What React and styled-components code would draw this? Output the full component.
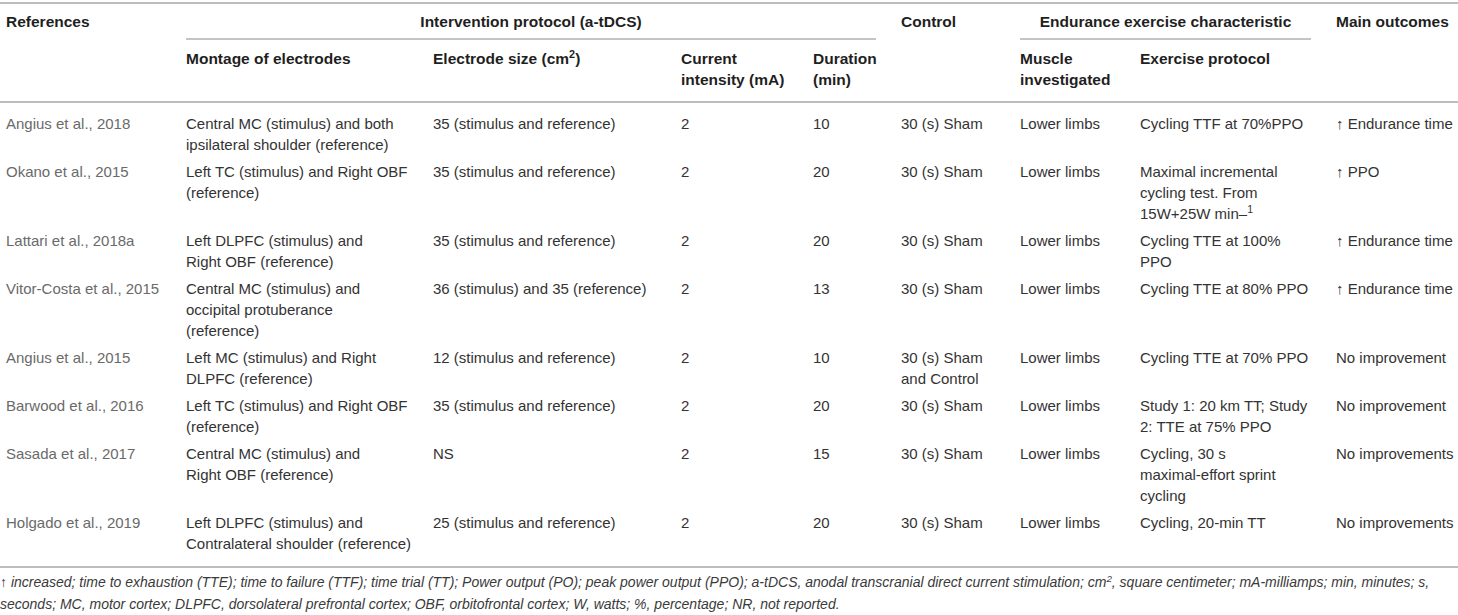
import styled, { createGlobalStyle } from 'styled-components'

const GlobalStyle = createGlobalStyle`
  html, body {
    margin: 0;
    padding: 0;
    background: #ffffff;
  }
  body {
    font-family: "Liberation Sans", Arial, sans-serif;
  }
`

const Page = styled.div`
  width: 1458px;
  padding-top: 2px;
`

const Table = styled.table`
  width: 1458px;
  table-layout: fixed;
  border-collapse: separate;
  border-spacing: 0;
  border-top: 2px solid #bdbdbd;
  font-size: 15px;
  line-height: 21px;
`

const Sup = styled.sup`
  font-size: 0.7em;
  line-height: 0;
  vertical-align: baseline;
  position: relative;
  top: -0.55em;
`

const HeadCell = styled.th`
  text-align: left;
  vertical-align: top;
  font-weight: 700;
  font-size: 15.5px;
  color: #1f1f1f;
  white-space: nowrap;
  padding: ${({ $row }) => ($row === 1 ? '7px 12px 0 6px' : '8px 12px 11px 6px')};
  border-bottom: ${({ $closing }) => ($closing ? '2px solid #bdbdbd' : 'none')};
`

const GroupCell = styled.th`
  font-weight: 700;
  font-size: 15.5px;
  color: #1f1f1f;
  white-space: nowrap;
  padding: 7px 19px 0 6px;
  vertical-align: top;
`

const GroupLabel = styled.div`
  text-align: center;
  padding-bottom: 6px;
  border-bottom: 2px solid #c4c4c4;
`

const Cell = styled.td`
  vertical-align: top;
  white-space: nowrap;
  color: ${({ $muted }) => ($muted ? '#6a6a6a' : '#333333')};
  padding: ${({ $first }) => ($first ? '10px' : '3px')} 12px
    ${({ $last }) => ($last ? '12px' : '3px')} 6px;
  border-bottom: ${({ $last }) => ($last ? '2px solid #bdbdbd' : 'none')};
`

const Note = styled.p`
  margin: 0;
  padding-top: 3px;
  font-style: italic;
  font-size: 14px;
  line-height: 22px;
  color: #3a3a3a;
`

const colWidths = [180, 247, 248, 132, 88, 119, 120, 196, 128]

const rows = [
  {
    ref: 'Angius et al., 2018',
    montage: ['Central MC (stimulus) and both', 'ipsilateral shoulder (reference)'],
    size: ['35 (stimulus and reference)'],
    current: '2',
    duration: '10',
    control: ['30 (s) Sham'],
    muscle: 'Lower limbs',
    exercise: ['Cycling TTF at 70%PPO'],
    outcome: '↑ Endurance time',
  },
  {
    ref: 'Okano et al., 2015',
    montage: ['Left TC (stimulus) and Right OBF', '(reference)'],
    size: ['35 (stimulus and reference)'],
    current: '2',
    duration: '20',
    control: ['30 (s) Sham'],
    muscle: 'Lower limbs',
    exercise: [
      'Maximal incremental',
      'cycling test. From',
      <>
        15W+25W min–<Sup>1</Sup>
      </>,
    ],
    outcome: '↑ PPO',
  },
  {
    ref: 'Lattari et al., 2018a',
    montage: ['Left DLPFC (stimulus) and', 'Right OBF (reference)'],
    size: ['35 (stimulus and reference)'],
    current: '2',
    duration: '20',
    control: ['30 (s) Sham'],
    muscle: 'Lower limbs',
    exercise: ['Cycling TTE at 100%', 'PPO'],
    outcome: '↑ Endurance time',
  },
  {
    ref: 'Vitor-Costa et al., 2015',
    montage: ['Central MC (stimulus) and', 'occipital protuberance', '(reference)'],
    size: ['36 (stimulus) and 35 (reference)'],
    current: '2',
    duration: '13',
    control: ['30 (s) Sham'],
    muscle: 'Lower limbs',
    exercise: ['Cycling TTE at 80% PPO'],
    outcome: '↑ Endurance time',
  },
  {
    ref: 'Angius et al., 2015',
    montage: ['Left MC (stimulus) and Right', 'DLPFC (reference)'],
    size: ['12 (stimulus and reference)'],
    current: '2',
    duration: '10',
    control: ['30 (s) Sham', 'and Control'],
    muscle: 'Lower limbs',
    exercise: ['Cycling TTE at 70% PPO'],
    outcome: 'No improvement',
  },
  {
    ref: 'Barwood et al., 2016',
    montage: ['Left TC (stimulus) and Right OBF', '(reference)'],
    size: ['35 (stimulus and reference)'],
    current: '2',
    duration: '20',
    control: ['30 (s) Sham'],
    muscle: 'Lower limbs',
    exercise: ['Study 1: 20 km TT; Study', '2: TTE at 75% PPO'],
    outcome: 'No improvement',
  },
  {
    ref: 'Sasada et al., 2017',
    montage: ['Central MC (stimulus) and', 'Right OBF (reference)'],
    size: ['NS'],
    current: '2',
    duration: '15',
    control: ['30 (s) Sham'],
    muscle: 'Lower limbs',
    exercise: ['Cycling, 30 s', 'maximal-effort sprint', 'cycling'],
    outcome: 'No improvements',
  },
  {
    ref: 'Holgado et al., 2019',
    montage: ['Left DLPFC (stimulus) and', 'Contralateral shoulder (reference)'],
    size: ['25 (stimulus and reference)'],
    current: '2',
    duration: '20',
    control: ['30 (s) Sham'],
    muscle: 'Lower limbs',
    exercise: ['Cycling, 20-min TT'],
    outcome: 'No improvements',
  },
]

function Lines({ items }) {
  return items.map((line, i) => (
    <span key={i}>
      {i > 0 && <br />}
      {line}
    </span>
  ))
}

export default function App() {
  return (
    <Page>
      <GlobalStyle />
      <Table>
        <colgroup>
          {colWidths.map((w, i) => (
            <col key={i} style={{ width: w }} />
          ))}
        </colgroup>
        <thead>
          <tr>
            <HeadCell $row={1} rowSpan={2} $closing>References</HeadCell>
            <GroupCell colSpan={4}>
              <GroupLabel>Intervention protocol (a-tDCS)</GroupLabel>
            </GroupCell>
            <HeadCell $row={1} rowSpan={2} $closing>Control</HeadCell>
            <GroupCell colSpan={2}>
              <GroupLabel>Endurance exercise characteristic</GroupLabel>
            </GroupCell>
            <HeadCell $row={1} rowSpan={2} $closing>Main outcomes</HeadCell>
          </tr>
          <tr>
            <HeadCell $closing>Montage of electrodes</HeadCell>
            <HeadCell $closing>
              Electrode size (cm<Sup>2</Sup>)
            </HeadCell>
            <HeadCell $closing>
              Current
              <br />
              intensity (mA)
            </HeadCell>
            <HeadCell $closing>
              Duration
              <br />
              (min)
            </HeadCell>
            <HeadCell $closing>
              Muscle
              <br />
              investigated
            </HeadCell>
            <HeadCell $closing>Exercise protocol</HeadCell>
          </tr>
        </thead>
        <tbody>
          {rows.map((r, i) => {
            const edge = { $first: i === 0, $last: i === rows.length - 1 }
            return (
              <tr key={r.ref}>
                <Cell {...edge} $muted>{r.ref}</Cell>
                <Cell {...edge}><Lines items={r.montage} /></Cell>
                <Cell {...edge}><Lines items={r.size} /></Cell>
                <Cell {...edge}>{r.current}</Cell>
                <Cell {...edge}>{r.duration}</Cell>
                <Cell {...edge}><Lines items={r.control} /></Cell>
                <Cell {...edge}>{r.muscle}</Cell>
                <Cell {...edge}><Lines items={r.exercise} /></Cell>
                <Cell {...edge}>{r.outcome}</Cell>
              </tr>
            )
          })}
        </tbody>
      </Table>
      <Note>
        ↑ increased; time to exhaustion (TTE); time to failure (TTF); time trial (TT); Power
        output (PO); peak power output (PPO); a-tDCS, anodal transcranial direct current
        stimulation; cm<Sup>2</Sup>, square centimeter; mA-milliamps; min, minutes; s,
        <br />
        seconds; MC, motor cortex; DLPFC, dorsolateral prefrontal cortex; OBF, orbitofrontal
        cortex; W, watts; %, percentage; NR, not reported.
      </Note>
    </Page>
  )
}
